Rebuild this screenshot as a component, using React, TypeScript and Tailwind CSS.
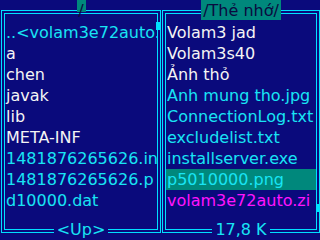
type Row = { name: string; color: string; selected?: boolean };

const WHITE = "text-[#f4f4f4]";
const CYAN = "text-[#18e4f4]";

const left: Row[] = [
  { name: "..<volam3e72auto.", color: CYAN },
  { name: "a", color: WHITE },
  { name: "chen", color: WHITE },
  { name: "javak", color: WHITE },
  { name: "lib", color: WHITE },
  { name: "META-INF", color: WHITE },
  { name: "1481876265626.in", color: CYAN },
  { name: "1481876265626.p", color: CYAN },
  { name: "d10000.dat", color: CYAN },
];

const right: Row[] = [
  { name: "Volam3 jad", color: WHITE },
  { name: "Volam3s40", color: WHITE },
  { name: "Ảnh thỏ", color: WHITE },
  { name: "Anh mung tho.jpg", color: CYAN },
  { name: "ConnectionLog.txt", color: CYAN },
  { name: "excludelist.txt", color: CYAN },
  { name: "installserver.exe", color: CYAN },
  { name: "p5010000.png", color: CYAN, selected: true },
  { name: "volam3e72auto.zi", color: "text-[#ff14ff]" },
];

// one file pane with double cyan frame, title tab on top, label on bottom
const Panel = ({
  rows,
  className,
  title,
  footer,
  marker,
}: {
  rows: Row[];
  className: string;
  title: React.ReactNode;
  footer: string;
  marker: string;
}) => (
  <div className={`relative h-[223px] border border-[#00e0ff] p-[2px] flex ${className}`}>
    <div className="flex-1 border border-[#00e0ff] pt-[8px] overflow-hidden">
      {rows.map((r) => (
        <div
          key={r.name}
          className={`h-[21px] leading-[21px] pl-[1px] whitespace-nowrap overflow-hidden ${r.color} ${
            r.selected ? "bg-[#00887c]" : ""
          }`}
        >
          {r.name}
        </div>
      ))}
    </div>
    {/* scroll position marker */}
    <div className={`absolute w-[4px] h-[8px] bg-[#00e0ff] ${marker}`} />
    <div className="absolute inset-x-0 top-[-11px] flex justify-center">{title}</div>
    <div className="absolute inset-x-0 bottom-[-8px] flex justify-center">
      <span className="px-[3px] leading-[21px] whitespace-nowrap bg-[#0a0a7c] text-[#18e4f4]">
        {footer}
      </span>
    </div>
  </div>
);

export default function App() {
  return (
    <div
      className="w-[320px] h-[240px] overflow-hidden bg-[#0a0a7c] text-[16px]"
      style={{ fontFamily: '"DejaVu Sans", sans-serif' }}
    >
      <div className="flex pt-[10px] pl-[1px] gap-[1px]">
        <Panel
          rows={left}
          className="w-[160px]"
          footer="<Up>"
          marker="right-0 top-[11px]"
          title={
            <div className="relative w-[9px] h-[21px] flex justify-center">
              <div className="absolute inset-x-0 top-0 h-[12px] bg-[#00887c]" />
              <span className="relative leading-[21px] text-[#0a0a40]">/</span>
            </div>
          }
        />
        <Panel
          rows={right}
          className="w-[158px]"
          footer="17,8 K"
          marker="right-[-1px] top-[193px]"
          title={
            <span className="h-[20px] px-[2px] leading-[21px] whitespace-nowrap bg-[#00887c] text-[#0a0a40]">
              /Thẻ nhớ/
            </span>
          }
        />
      </div>
    </div>
  );
}
